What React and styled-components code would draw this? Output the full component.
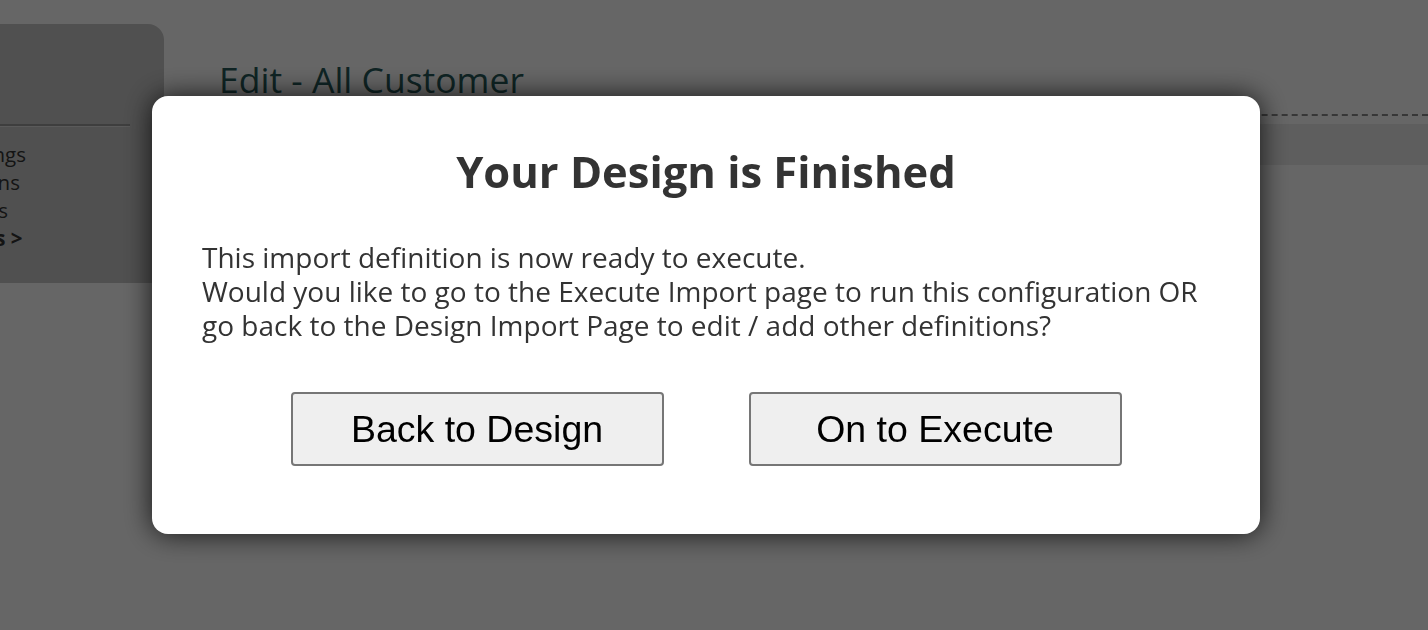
import React from "react";
import styled, { createGlobalStyle } from "styled-components";

const Global = createGlobalStyle`
  html, body { margin: 0; padding: 0; background: #ffffff; }
  body { font-family: "Open Sans", "Liberation Sans", sans-serif; overflow: hidden; }
`;

const Page = styled.div`
  width: 1428px;
  height: 630px;
  display: flex;
  align-items: flex-start;
  background: #ffffff;
`;

const Sidebar = styled.aside`
  width: 214px;
  margin-left: -50px;
  margin-top: 24px;
  height: 259px;
  background: #c8c8c8;
  border-top-right-radius: 16px;
  display: flex;
  flex-direction: column;
  flex-shrink: 0;
`;

const SideHead = styled.div`
  height: 100px;
  margin-right: 34px;
  border-bottom: 2px solid #9c9c9c;
  box-shadow: 0 1px 0 #e0e0e0;
`;

const SideNav = styled.ul`
  list-style: none;
  margin: 0;
  padding: 14px 0 0 0;
  display: flex;
  flex-direction: column;
`;

const SideItem = styled.li`
  font-family: "Open Sans", sans-serif;
  font-size: 20.5px;
  line-height: 28px;
  color: #333333;
  font-weight: ${(p) => (p.$bold ? 700 : 400)};
`;

const Main = styled.main`
  flex: 1;
  display: flex;
  flex-direction: column;
  padding-top: 57px;
  margin-left: 45px;
`;

const Heading = styled.h1`
  margin: 0;
  padding-left: 10px;
  font-family: "Open Sans", sans-serif;
  font-weight: 400;
  font-size: 35.5px;
  line-height: 44px;
  color: #265a5a;
  height: 57px;
  border-bottom: 2px dashed #8a8a8a;
`;

const Toolbar = styled.div`
  margin-top: 8px;
  height: 41px;
  background: #ebebeb;
`;

const Overlay = styled.div`
  position: fixed;
  inset: 0;
  background: rgba(0, 0, 0, 0.6);
  display: flex;
  align-items: center;
  justify-content: center;
  padding-right: 16px;
`;

const Modal = styled.div`
  width: 1108px;
  height: 438px;
  box-sizing: border-box;
  background: #ffffff;
  border-radius: 16px;
  box-shadow: 0 0 28px rgba(0, 0, 0, 0.8);
  padding: 48px 36px 0 50px;
  display: flex;
  flex-direction: column;
`;

const Title = styled.h2`
  margin: 0 14px 0 0;
  text-align: center;
  font-family: "Open Sans", sans-serif;
  font-weight: 700;
  font-size: 43.5px;
  line-height: 56px;
  color: #333333;
`;

const Body = styled.p`
  margin: 40px 0 0 0;
  font-family: "Open Sans", sans-serif;
  font-size: 28px;
  line-height: 34px;
  color: #333333;
`;

const Actions = styled.div`
  display: flex;
  justify-content: center;
  gap: 85px;
  margin: 50px 14px 0 0;
`;

const Button = styled.button`
  width: 373px;
  height: 74px;
  box-sizing: border-box;
  background: #efefef;
  border: 2px solid #767676;
  border-radius: 4px;
  font-family: "Liberation Sans", Arial, sans-serif;
  font-size: 37.5px;
  color: #000000;
  padding: 0;
  cursor: pointer;
`;

export default function App() {
  return (
    <>
      <Global />
      <Page>
        <Sidebar>
          <SideHead />
          <SideNav>
            <SideItem>Settings</SideItem>
            <SideItem>Actions</SideItem>
            <SideItem>Filters</SideItem>
            <SideItem $bold>Steps &gt;</SideItem>
          </SideNav>
        </Sidebar>
        <Main>
          <Heading>Edit - All Customer</Heading>
          <Toolbar />
        </Main>
      </Page>
      <Overlay>
        <Modal role="dialog">
          <Title>Your Design is Finished</Title>
          <Body>
            This import definition is now ready to execute.
            <br />
            Would you like to go to the Execute Import page to run this configuration OR go back to the Design Import Page to edit / add other definitions?
          </Body>
          <Actions>
            <Button>Back to Design</Button>
            <Button>On to Execute</Button>
          </Actions>
        </Modal>
      </Overlay>
    </>
  );
}
